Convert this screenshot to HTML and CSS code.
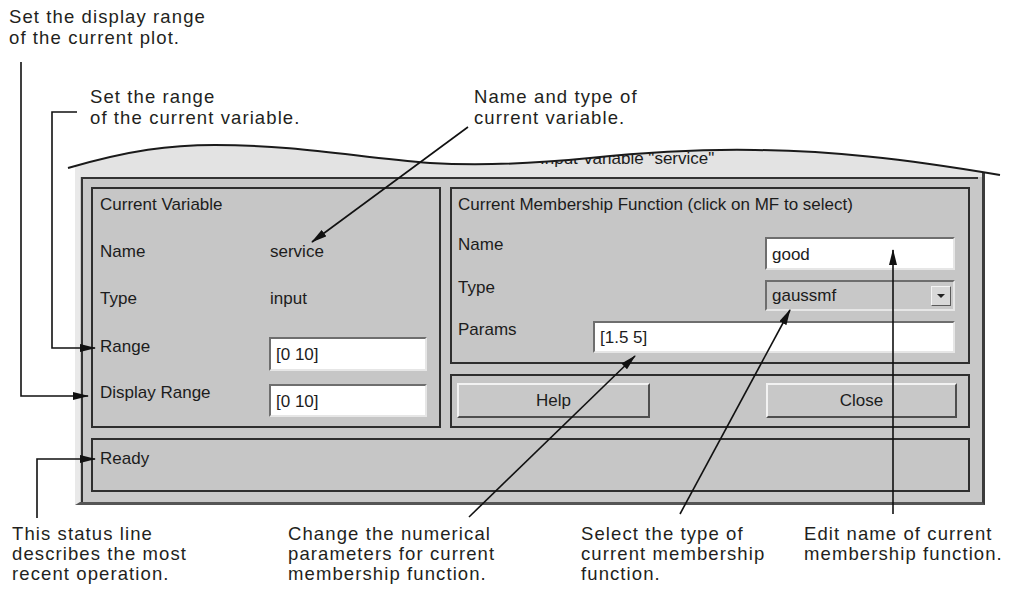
FILE: index.html
```html
<!DOCTYPE html>
<html>
<head>
<meta charset="utf-8">
<link rel="stylesheet" href="styles.css">
</head>
<body>
<div class="figure">
  <p class="note note-display">Set the display range<br>of the current plot.</p>
  <p class="note note-range">Set the range<br>of the current variable.</p>
  <p class="note note-name">Name and type of<br>current variable.</p>

  <div class="window">
    <div class="titlebar"><span class="title">Input Variable "service"</span></div>
    <div class="client">
      <section class="panel var-panel">
        <div class="panel-title">Current Variable</div>
        <div class="row row-name"><span class="lbl">Name</span><span class="val">service</span></div>
        <div class="row row-type"><span class="lbl">Type</span><span class="val">input</span></div>
        <div class="row row-range"><span class="lbl">Range</span><div class="field f-range">[0 10]</div></div>
        <div class="row row-disp"><span class="lbl">Display Range</span><div class="field f-disp">[0 10]</div></div>
      </section>
      <section class="panel mf-panel">
        <div class="panel-title">Current Membership Function (click on MF to select)</div>
        <div class="row mf-row1"><span class="lbl">Name</span><div class="field f-name">good</div></div>
        <div class="row mf-row2"><span class="lbl">Type</span><div class="field popup"><span>gaussmf</span><span class="drop"><span class="tri"></span></span></div></div>
        <div class="row mf-row3"><span class="lbl">Params</span><div class="field f-params">[1.5 5]</div></div>
      </section>
      <section class="panel btn-panel">
        <div class="btn btn-help">Help</div>
        <div class="btn btn-close">Close</div>
      </section>
      <section class="panel status-panel">Ready</section>
    </div>
  </div>

  <p class="note note-status">This status line<br>describes the most<br>recent operation.</p>
  <p class="note note-params">Change the numerical<br>parameters for current<br>membership function.</p>
  <p class="note note-type">Select the type of<br>current membership<br>function.</p>
  <p class="note note-edit">Edit name of current<br>membership function.</p>

  <svg class="leaders" width="1012" height="589" viewBox="0 0 1012 589">
    <defs>
      <marker id="ah" markerWidth="16" markerHeight="8" refX="15" refY="4" orient="auto" markerUnits="userSpaceOnUse">
        <path d="M0,0 L16,4 L0,8 Z" fill="#111"/>
      </marker>
    </defs>
    <path class="mask" d="M68,168 C130,150 170,145 215,145 C300,145 360,158 430,163 C480,166 530,164 590,158 C650,152 700,149 755,150 C830,151 900,158 1000,175 L1012,175 L1012,132 L60,132 L60,168 Z"/>
    <path class="wave" d="M68,168 C130,150 170,145 215,145 C300,145 360,158 430,163 C480,166 530,164 590,158 C650,152 700,149 755,150 C830,151 900,158 1000,175"/>
    <polyline class="lead" points="21,62 21,396 88,396" marker-end="url(#ah)"/>
    <polyline class="lead" points="77,112 52,112 52,348 95,348" marker-end="url(#ah)"/>
    <polyline class="lead" points="37,518 37,459 95,459" marker-end="url(#ah)"/>
    <line class="lead" x1="468" y1="127" x2="312" y2="242" marker-end="url(#ah)"/>
    <line class="lead" x1="469" y1="517" x2="635" y2="356" marker-end="url(#ah)"/>
    <line class="lead" x1="680" y1="514" x2="790" y2="310" marker-end="url(#ah)"/>
    <line class="lead" x1="893" y1="514" x2="893" y2="250" marker-end="url(#ah)"/>
  </svg>
</div>
</body>
</html>
```

FILE: styles.css
```css
* { box-sizing: border-box; }

html, body {
  margin: 0;
  padding: 0;
  background: #ffffff;
}

.figure {
  position: relative;
  width: 1012px;
  height: 589px;
  padding-top: 140px;
  overflow: hidden;
}

/* callout notes */
.note {
  position: absolute;
  margin: 0;
  font-family: "Liberation Sans", Arial, sans-serif;
  font-size: 18.5px;
  line-height: 21px;
  letter-spacing: 1.1px;
  color: #231f20;
  white-space: nowrap;
}
.note-display { left: 9px; top: 6px; }
.note-range { left: 90px; top: 86px; }
.note-name { left: 474px; top: 86px; }
.note-status { left: 12px; top: 524px; line-height: 20px; }
.note-params { left: 288px; top: 524px; line-height: 20px; }
.note-type { left: 581px; top: 524px; line-height: 20px; }
.note-edit { left: 804px; top: 524px; line-height: 20px; }

/* window */
.window {
  margin-left: 75px;
  width: 910px;
  height: 365px;
  background: #c8c8c8;
  border-left: 5px solid #e9e9e9;
  border-right: 3px solid #3c3c3c;
  border-bottom: 3px solid #555555;
  display: flex;
  flex-direction: column;
  font-family: "Liberation Sans", Arial, sans-serif;
  font-size: 17px;
  line-height: 20px;
  color: #1c1c1c;
}

.titlebar {
  height: 37px;
  background: #e3e3e3;
  padding: 9px 0 0 460px;
  white-space: nowrap;
}

.client {
  flex: 1;
  margin: 0 4px 0 1px;
  border-top: 2px solid #333333;
  border-left: 2px solid #333333;
  background: #c8c8c8;
  padding: 8px 8px 10px 8px;
  display: grid;
  grid-template-columns: 350px 520px;
  grid-template-rows: 177px 54px 54px;
  column-gap: 9px;
  row-gap: 10px;
}

.panel {
  border: 2px solid #2e2e2e;
  background: #c6c6c6;
}

.panel-title { white-space: nowrap; }

.row {
  display: flex;
  align-items: flex-start;
}

/* current variable panel */
.var-panel {
  grid-column: 1;
  grid-row: 1 / 3;
  padding: 6px 12px 0 7px;
  display: flex;
  flex-direction: column;
}
.var-panel .lbl { width: 169px; flex: none; }
.row-name { margin-top: 27px; }
.row-type { margin-top: 27px; }
.row-range { margin-top: 28px; }
.row-disp { margin-top: 13px; }
.row-disp .lbl { margin-top: -1px; }
.val { padding-left: 1px; }

.field {
  background: #ffffff;
  border-style: solid;
  border-width: 2px;
  border-color: #6e6e6e #e6e6e6 #e6e6e6 #6e6e6e;
  display: flex;
  align-items: center;
  padding-left: 5px;
  white-space: nowrap;
}
.f-range { width: 158px; height: 34px; padding-top: 2px; }
.f-disp { width: 158px; height: 33px; padding-top: 2px; }

/* membership function panel */
.mf-panel {
  grid-column: 2;
  grid-row: 1;
  padding: 6px 13px 0 6px;
  display: flex;
  flex-direction: column;
}
.mf-panel .lbl { flex: none; }
.mf-panel .field { margin-left: auto; }
.mf-row1 { margin-top: 22px; }
.mf-row1 .lbl { margin-top: -2px; }
.mf-row2 { margin-top: 10px; }
.mf-row2 .lbl { margin-top: -2px; }
.mf-row3 { margin-top: 10px; }
.mf-row3 .lbl { margin-top: -1px; }
.f-name { width: 190px; height: 33px; padding-top: 2px; }
.popup {
  width: 190px;
  height: 31px;
  background: #c8c8c8;
  justify-content: space-between;
  padding-right: 2px;
}
.drop {
  width: 20px;
  height: 20px;
  background: #d8d8d8;
  border-style: solid;
  border-width: 1px;
  border-color: #f4f4f4 #5a5a5a #5a5a5a #f4f4f4;
  display: flex;
  align-items: center;
  justify-content: center;
}
.tri {
  width: 0;
  height: 0;
  border-left: 4px solid transparent;
  border-right: 4px solid transparent;
  border-top: 4px solid #222222;
}
.f-params { width: 362px; height: 32px; padding-top: 2px; }

/* buttons */
.btn-panel {
  grid-column: 2;
  grid-row: 2;
  display: flex;
  justify-content: space-between;
  padding: 7px 11px 8px 5px;
}
.btn {
  height: 35px;
  background: #c8c8c8;
  border-style: solid;
  border-width: 2px;
  border-color: #f2f2f2 #4e4e4e #4e4e4e #f2f2f2;
  display: flex;
  align-items: center;
  justify-content: center;
}
.btn-help { width: 193px; }
.btn-close { width: 191px; }

/* status line */
.status-panel {
  grid-column: 1 / 3;
  grid-row: 3;
  padding: 9px 7px;
}

/* leader lines overlay */
.leaders {
  position: absolute;
  left: 0;
  top: 0;
  pointer-events: none;
}
.mask { fill: #ffffff; stroke: none; }
.wave { fill: none; stroke: #1a1a1a; stroke-width: 2; }
.lead { fill: none; stroke: #111111; stroke-width: 1.6; }
```
